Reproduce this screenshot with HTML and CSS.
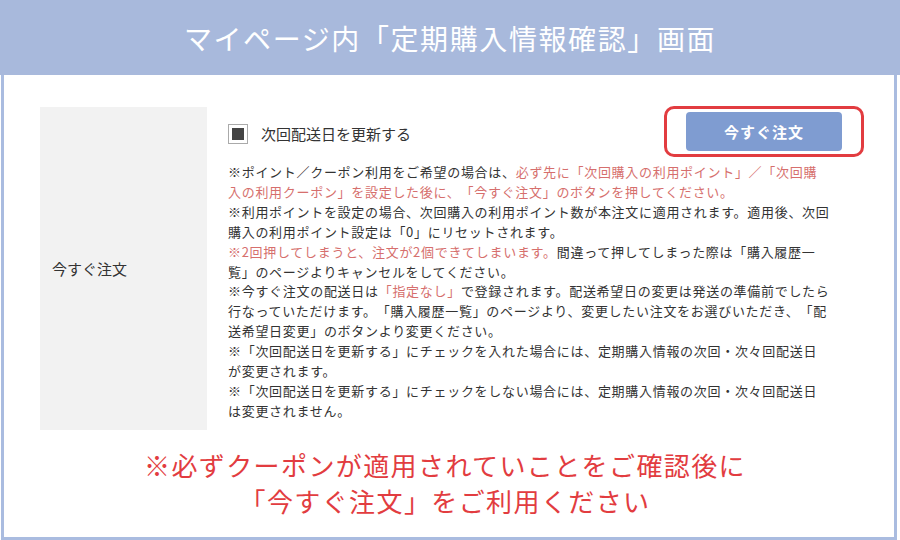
FILE: index.html
```html
<!DOCTYPE html>
<html lang="ja">
<head>
  <meta charset="UTF-8" />
  <meta name="viewport" content="width=device-width, initial-scale=1.0"/>
  <title>定期購入情報確認</title>
  <link rel="stylesheet" href="styles.css">
</head>
<body>

  <div class="header">
    <h1>マイページ内「定期購入情報確認」画面</h1>
  </div>

  <div class="frame">
    <div class="row">
      <div class="label">今すぐ注文</div>

      <div class="content">
        <div class="top-line">
          <label class="check">
            <span class="check-box"><span class="check-fill"></span></span>
            <span>次回配送日を更新する</span>
          </label>
          <div class="btn-ring">
            <button class="btn-order">今すぐ注文</button>
          </div>
        </div>

        <p class="notes">
          ※ポイント／クーポン利用をご希望の場合は、<span class="warn">必ず先に「次回購入の利用ポイント」／「次回購<br>入の利用クーポン」を設定した後に、「今すぐ注文」のボタンを押してください。</span><br>
          ※利用ポイントを設定の場合、次回購入の利用ポイント数が本注文に適用されます。適用後、次回<br>
          購入の利用ポイント設定は「0」にリセットされます。<br>
          <span class="warn">※2回押してしまうと、注文が2個できてしまいます。</span>間違って押してしまった際は「購入履歴一<br>
          覧」のページよりキャンセルをしてください。<br>
          ※今すぐ注文の配送日は<span class="warn">「指定なし」</span>で登録されます。配送希望日の変更は発送の準備前でしたら<br>
          行なっていただけます。「購入履歴一覧」のページより、変更したい注文をお選びいただき、「配<br>
          送希望日変更」のボタンより変更ください。<br>
          ※「次回配送日を更新する」にチェックを入れた場合には、定期購入情報の次回・次々回配送日<br>
          が変更されます。<br>
          ※「次回配送日を更新する」にチェックをしない場合には、定期購入情報の次回・次々回配送日<br>
          は変更されません。
        </p>
      </div>
    </div>

    <p class="caution">※必ずクーポンが適用されていことをご確認後に<br>「今すぐ注文」をご利用ください</p>
  </div>

</body>
</html>
```

FILE: styles.css
```css
* {
  box-sizing: border-box;
  margin: 0;
  padding: 0;
  font-family: "Noto Sans CJK JP", "Noto Sans", sans-serif;
  text-spacing-trim: space-all;
}

body {
  width: 900px;
  height: 540px;
  background-color: #fff;
  overflow: hidden;
}

.header {
  height: 75px;
  background-color: #a8b9dc;
  display: flex;
  align-items: center;
  justify-content: center;
}

.header h1 {
  color: #fff;
  font-size: 28px;
  font-weight: normal;
  letter-spacing: 1.6px;
  line-height: 1;
}

.frame {
  width: 896px;
  height: 465px;
  margin-left: 1px;
  border: 3px solid #aabce0;
  border-top: none;
  padding: 31px 0 0 36px;
}

.row {
  display: flex;
  gap: 21px;
}

.label {
  width: 167px;
  height: 323px;
  margin-top: 1px;
  background-color: #f2f2f2;
  color: #333;
  font-size: 15px;
  padding-left: 12px;
  display: flex;
  align-items: center;
}

.content {
  width: 636px;
}

.top-line {
  display: flex;
  justify-content: space-between;
  align-items: flex-start;
  height: 56px;
}

.check {
  display: flex;
  align-items: center;
  gap: 13px;
  margin-top: 17px;
  font-size: 15px;
  color: #333;
}

.check-box {
  width: 20px;
  height: 20px;
  border: 1px solid #aaa;
  background-color: #fff;
  display: flex;
  align-items: center;
  justify-content: center;
}

.check-fill {
  width: 12px;
  height: 12px;
  background-color: #444;
}

.btn-ring {
  width: 200px;
  height: 51px;
  border: 3px solid #e23c40;
  border-radius: 10px;
  display: flex;
  align-items: center;
  justify-content: center;
}

.btn-order {
  width: 156px;
  height: 39px;
  background-color: #7f9cd1;
  color: #fff;
  border: none;
  border-radius: 4px;
  font-size: 15px;
  font-weight: bold;
  letter-spacing: 1px;
}

.notes {
  font-size: 13px;
  line-height: 19.9px;
  letter-spacing: 0.7px;
  color: #333;
  white-space: nowrap;
}

.warn {
  color: #d66f6d;
}

.caution {
  margin-top: 17px;
  margin-left: -44px;
  text-align: center;
  color: #e23c40;
  font-size: 26px;
  line-height: 36px;
  letter-spacing: 1.4px;
}
```
